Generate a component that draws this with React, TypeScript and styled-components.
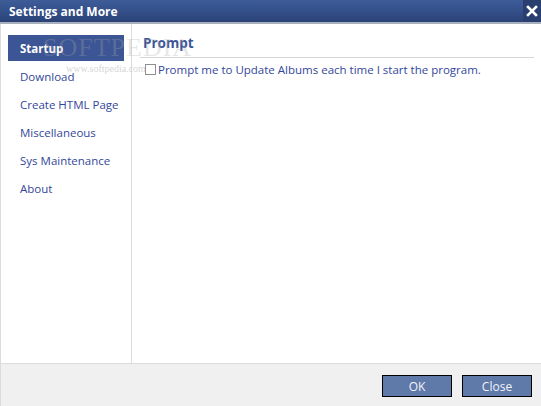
import { createGlobalStyle } from 'styled-components'
import styled from 'styled-components'

const GlobalStyle = createGlobalStyle`
  *, *::before, *::after {
    box-sizing: border-box;
  }
  html, body {
    margin: 0;
    padding: 0;
    background: #ffffff;
  }
  body {
    font-family: 'Open Sans', 'Noto Sans', sans-serif;
  }
`

const Window = styled.div`
  position: relative;
  width: 541px;
  height: 406px;
  display: flex;
  flex-direction: column;
  background: #ffffff;
  overflow: hidden;
`

const TitleBar = styled.div`
  height: 24px;
  flex-shrink: 0;
  display: flex;
  align-items: center;
  justify-content: space-between;
  padding-left: 9px;
  background: linear-gradient(to bottom, #3d5c98 0%, #34508a 50%, #2b4275 100%);
  border-bottom: 2px solid #a9b0bd;
  color: #ffffff;
  font-size: 12px;
  font-weight: 700;
`

const CloseBox = styled.div`
  width: 18px;
  height: 22px;
  display: flex;
  align-items: center;
  justify-content: center;
  background: #293f70;
`

const Body = styled.div`
  flex: 1;
  display: flex;
  border-left: 1px solid #dcdcdc;
`

const Sidebar = styled.div`
  width: 131px;
  border-right: 1px solid #dcdcdc;
  padding: 11px 7px 0 7px;
  display: flex;
  flex-direction: column;
`

const NavItem = styled.div<{ $active?: boolean }>`
  display: flex;
  align-items: center;
  padding-left: 12px;
  font-size: 11.5px;
  color: ${(p) => (p.$active ? '#ffffff' : '#33479a')};
  font-weight: ${(p) => (p.$active ? 700 : 400)};
  background: ${(p) => (p.$active ? '#3c5595' : 'transparent')};
  height: ${(p) => (p.$active ? '26px' : '28px')};
  margin-bottom: ${(p) => (p.$active ? '1px' : '0')};
`

const Content = styled.div`
  flex: 1;
  padding: 11px 7px 0 8px;
`

const SectionTitle = styled.div`
  font-size: 13.5px;
  font-weight: 700;
  color: #3b5596;
  padding: 0 0 5px 3px;
  border-bottom: 1px solid #d6d6d6;
  line-height: 17px;
`

const CheckRow = styled.label`
  display: flex;
  align-items: center;
  gap: 2px;
  margin-top: 4px;
  padding-left: 5px;
  font-size: 11.5px;
  color: #33479a;
`

const Box = styled.span`
  width: 11px;
  height: 11px;
  border: 1px solid #8f8f8f;
  background: #ffffff;
  display: inline-block;
`

const Footer = styled.div`
  height: 43px;
  flex-shrink: 0;
  border-top: 1px solid #dcdcdc;
  border-left: 1px solid #dcdcdc;
  background: #f0f0f0;
  display: flex;
  justify-content: flex-end;
  align-items: flex-start;
  gap: 10px;
  padding: 11px 9px 0 0;
`

const Button = styled.div`
  width: 70px;
  height: 22px;
  border: 1px solid #000000;
  background: #5f79a9;
  color: #f2f4f8;
  font-size: 12px;
  display: flex;
  align-items: center;
  justify-content: center;
`

const Watermark = styled.div`
  position: absolute;
  left: 43px;
  top: 33px;
  font-family: 'Liberation Serif', serif;
  font-size: 26px;
  letter-spacing: 1px;
  color: rgba(170, 170, 170, 0.3);
  pointer-events: none;
`

const WatermarkSmall = styled.div`
  position: absolute;
  left: 66px;
  top: 63px;
  font-family: 'Liberation Serif', serif;
  font-size: 10px;
  color: rgba(170, 170, 170, 0.5);
  pointer-events: none;
`

const items = ['Startup', 'Download', 'Create HTML Page', 'Miscellaneous', 'Sys Maintenance', 'About']

export default function App() {
  return (
    <Window>
      <GlobalStyle />
      <TitleBar>
        <span>Settings and More</span>
        <CloseBox>
          <svg width="12" height="12" viewBox="0 0 12 12">
            <path d="M2 2 L10 10 M10 2 L2 10" stroke="#ffffff" strokeWidth="2.6" strokeLinecap="square" />
          </svg>
        </CloseBox>
      </TitleBar>
      <Body>
        <Sidebar>
          {items.map((it, i) => (
            <NavItem key={it} $active={i === 0}>
              {it}
            </NavItem>
          ))}
        </Sidebar>
        <Content>
          <SectionTitle>Prompt</SectionTitle>
          <CheckRow>
            <Box />
            Prompt me to Update Albums each time I start the program.
          </CheckRow>
        </Content>
      </Body>
      <Footer>
        <Button>OK</Button>
        <Button>Close</Button>
      </Footer>
      <Watermark>SOFTPEDIA</Watermark>
      <WatermarkSmall>www.softpedia.com</WatermarkSmall>
    </Window>
  )
}
